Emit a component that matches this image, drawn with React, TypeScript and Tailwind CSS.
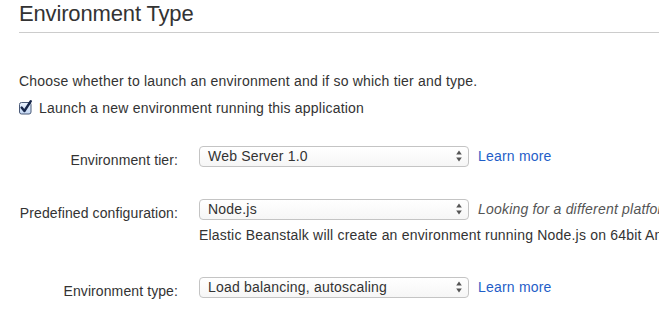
import React from "react";

function Arrows() {
  return (
    <svg width="6" height="12" viewBox="0 0 6 12" className="block">
      <path d="M3 0.5 L5.8 4.5 L0.2 4.5 Z" fill="#555" />
      <path d="M3 11.5 L5.8 7.5 L0.2 7.5 Z" fill="#555" />
    </svg>
  );
}

function Select({ value }: { value: string }) {
  return (
    <div className="w-[270px] h-[21px] shrink-0 rounded-[4px] border border-[#c4c4c4] bg-gradient-to-b from-[#ffffff] to-[#f6f6f6] flex items-start pl-[8px] pr-[6px]">
      <span className="flex-1 text-[14px] leading-[18px] tracking-[0.2px] text-[#333]">{value}</span>
      <span className="mt-[3px]">
        <Arrows />
      </span>
    </div>
  );
}

function Row({ label, value, extra }: { label: string; value: string; extra: React.ReactNode }) {
  return (
    <div className="flex items-start">
      <div className="w-[178px] shrink-0 text-right mt-[4px] text-[14px] leading-[20px] tracking-[0.1px] text-[#333]">{label}</div>
      <div className="ml-[21px]">
        <Select value={value} />
      </div>
      <div className="ml-[9px] text-[14px] leading-[18px] tracking-[0.2px] mt-[1px] whitespace-nowrap">{extra}</div>
    </div>
  );
}

function CheckBox() {
  return (
    <svg width="16" height="16" viewBox="0 0 16 16" className="block">
      <defs>
        <linearGradient id="cbg" x1="0" y1="0" x2="0" y2="1">
          <stop offset="0" stopColor="#eaf2fd" />
          <stop offset="1" stopColor="#c3d7f3" />
        </linearGradient>
      </defs>
      <rect x="1.5" y="3.5" width="11.5" height="11.5" rx="2" fill="url(#cbg)" stroke="#4a5a78" strokeWidth="1" />
      <path d="M3.6 8.6 L6.4 12 L12.8 2.2" fill="none" stroke="#16264a" strokeWidth="2.4" strokeLinecap="round" strokeLinejoin="round" />
    </svg>
  );
}

export default function App() {
  return (
    <div className="w-[659px] h-[322px] overflow-hidden bg-white whitespace-nowrap" style={{ fontFamily: '"Liberation Sans", Arial, sans-serif' }}>
      <div className="pl-[19px]">
        <h1 className="text-[22px] leading-[28px] tracking-[-0.15px] text-[#333] pb-[4px] border-b border-[#cccccc]">Environment Type</h1>
        <p className="mt-[38px] text-[14px] leading-[20px] tracking-[0.2px] text-[#333]">
          Choose whether to launch an environment and if so which tier and type.
        </p>
        <div className="mt-[7px] flex items-start">
          <span className="mt-[1px] -ml-[1px]">
            <CheckBox />
          </span>
          <span className="ml-[5px] text-[14px] leading-[20px] tracking-[0.2px] text-[#333]">Launch a new environment running this application</span>
        </div>
      </div>
      <div className="mt-[28px]">
        <Row label="Environment tier:" value="Web Server 1.0" extra={<span className="text-[#1f5ec8]">Learn more</span>} />
        <div className="mt-[29px]">
          <Row
            label="Predefined configuration:"
            value="Node.js"
            extra={<span className="italic text-[#555]">Looking for a different platform? Select from the list.</span>}
          />
        </div>
        <div className="mt-[2px] ml-[199px] text-[14px] leading-[20px] tracking-[0.2px] text-[#333]">
          Elastic Beanstalk will create an environment running Node.js on 64bit Amazon Linux.
        </div>
        <div className="mt-[32px]">
          <Row label="Environment type:" value="Load balancing, autoscaling" extra={<span className="text-[#1f5ec8]">Learn more</span>} />
        </div>
      </div>
    </div>
  );
}
